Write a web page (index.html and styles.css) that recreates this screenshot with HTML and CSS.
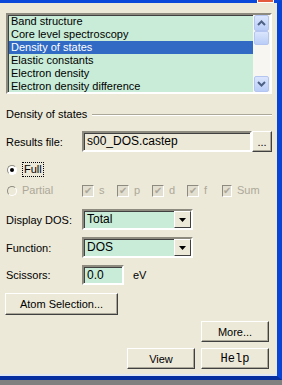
FILE: index.html
```html
<!DOCTYPE html>
<html lang="en">
<head>
  <meta charset="UTF-8" />
  <title>Analysis - Density of states</title>
  <link rel="stylesheet" href="styles.css">
</head>
<body>
  <div class="window">
    <span class="close-edge"></span>

    <div class="listbox">
      <ul class="items">
        <li>Band structure</li>
        <li>Core level spectroscopy</li>
        <li class="selected">Density of states</li>
        <li>Elastic constants</li>
        <li>Electron density</li>
        <li>Electron density difference</li>
      </ul>
      <div class="scrollbar">
        <div class="sb-btn">
          <svg width="9" height="6" viewBox="0 0 9 6"><path d="M1 5 L4.5 1.5 L8 5" fill="none" stroke="#4d6185" stroke-width="2"/></svg>
        </div>
        <div class="sb-thumb"></div>
        <div class="sb-track"></div>
        <div class="sb-btn">
          <svg width="9" height="6" viewBox="0 0 9 6"><path d="M1 1 L4.5 4.5 L8 1" fill="none" stroke="#4d6185" stroke-width="2"/></svg>
        </div>
      </div>
    </div>

    <div class="group">
      <span>Density of states</span>
      <span class="rule"></span>
    </div>

    <div class="row results">
      <label class="lbl">Results file:</label>
      <div class="field readonly">s00_DOS.castep</div>
      <button class="btn dots">...</button>
    </div>

    <div class="row radio-row">
      <span class="radio on"><span class="dot"></span></span>
      <span class="focus">Full</span>
    </div>

    <div class="row radio-row partial">
      <span class="radio"></span>
      <span class="lbl-partial">Partial</span>
      <div class="checks">
        <span class="check"><span class="box">&#10004;</span>s</span>
        <span class="check"><span class="box">&#10004;</span>p</span>
        <span class="check"><span class="box">&#10004;</span>d</span>
        <span class="check"><span class="box">&#10004;</span>f</span>
        <span class="check"><span class="box">&#10004;</span>Sum</span>
      </div>
    </div>

    <div class="row combo-row first">
      <label class="lbl">Display DOS:</label>
      <div class="combo">
        <span class="combo-text">Total</span>
        <span class="combo-btn"><svg width="7" height="4" viewBox="0 0 7 4"><path d="M0 0 H7 L3.5 4 Z" fill="#000"/></svg></span>
      </div>
    </div>

    <div class="row combo-row">
      <label class="lbl">Function:</label>
      <div class="combo">
        <span class="combo-text">DOS</span>
        <span class="combo-btn"><svg width="7" height="4" viewBox="0 0 7 4"><path d="M0 0 H7 L3.5 4 Z" fill="#000"/></svg></span>
      </div>
    </div>

    <div class="row scissors">
      <label class="lbl">Scissors:</label>
      <div class="field small">0.0</div>
      <span class="unit">eV</span>
    </div>

    <div class="row atoms">
      <button class="btn atom">Atom Selection...</button>
    </div>

    <div class="row right more">
      <button class="btn wide">More...</button>
    </div>

    <div class="row right actions">
      <button class="btn wide">View</button>
      <button class="btn wide help">Help</button>
    </div>
  </div>
</body>
</html>
```

FILE: styles.css
```css
body {
  margin: 0;
  width: 282px;
  height: 385px;
  overflow: hidden;
  background: #808080;
  font-family: "Liberation Sans", Arial, sans-serif;
  font-size: 11px;
  color: #000;
}

.window {
  position: relative;
  box-sizing: border-box;
  width: 282px;
  height: 380px;
  background: #ece9d8;
  border-top: 3px solid #0a49d9;
  border-right: 5px solid #0845d6;
  border-bottom: 4px solid #062e9e;
  box-shadow: inset 0 -2px 0 #dfe6f4;
  padding-left: 6px;
  display: flex;
  flex-direction: column;
}

.close-edge {
  position: absolute;
  top: -3px;
  left: 257px;
  width: 15px;
  height: 2px;
  border: 1px solid #fff;
  border-top: none;
  background: #e35b3c;
}

/* list */
.listbox {
  margin-top: 10px;
  width: 266px;
  height: 81px;
  box-sizing: border-box;
  border: 2px solid;
  border-color: #8d8b80 #fff #fff #8d8b80;
  box-shadow: inset 1px 1px 0 #404040;
  background: #c8ecd7;
  display: flex;
}

.items {
  list-style: none;
  margin: 0;
  padding: 0;
  flex: 1;
}

.items li {
  height: 13px;
  line-height: 13px;
  padding-left: 2px;
  margin-left: 1px;
  white-space: nowrap;
}

.items li.selected {
  background: #316ac5;
  color: #fff;
}

.scrollbar {
  width: 17px;
  background: #f7f6f1;
  display: flex;
  flex-direction: column;
}

.sb-btn, .sb-thumb {
  box-sizing: border-box;
  background: linear-gradient(#dbe6fd, #b9cdf7);
  border: 1px solid #b4c6ef;
  border-radius: 2px;
  margin: 0 1px;
}

.sb-btn {
  height: 16px;
  display: flex;
  align-items: center;
  justify-content: center;
}

.sb-thumb {
  height: 14px;
}

.sb-track {
  flex: 1;
}

/* group */
.group {
  margin-top: 14px;
  height: 13px;
  line-height: 13px;
  display: flex;
  align-items: center;
  width: 266px;
}

.rule {
  flex: 1;
  margin-left: 5px;
  height: 0;
  border-top: 1px solid #aca899;
  border-bottom: 1px solid #fff;
}

/* rows */
.row {
  display: flex;
  align-items: center;
}

.lbl {
  width: 76px;
}

.results {
  margin-top: 10px;
  height: 21px;
}

.field {
  box-sizing: border-box;
  height: 21px;
  line-height: 17px;
  padding-left: 3px;
  border: 2px solid;
  border-color: #8d8b80 #fff #fff #8d8b80;
  box-shadow: inset 1px 1px 0 #404040;
  font-size: 12px;
}

.readonly {
  width: 170px;
  background: #ece9d8;
}

.small {
  width: 42px;
  height: 20px;
  line-height: 16px;
  background: #c8ecd7;
}

.btn {
  box-sizing: border-box;
  font: inherit;
  color: #000;
  background: #ece9d8;
  border: 1px solid;
  border-color: #fff #404040 #404040 #fff;
  box-shadow: inset -1px -1px 0 #aca899;
  padding: 0;
  height: 21px;
}

.dots {
  width: 20px;
  line-height: 14px;
}

.radio-row {
  height: 13px;
  line-height: 13px;
}

.radio-row:not(.partial) {
  margin-top: 11px;
}

.partial {
  margin-top: 8px;
  color: #aca899;
}

.radio {
  box-sizing: border-box;
  width: 10px;
  height: 10px;
  border-radius: 50%;
  border: 1px solid;
  border-color: #8d8b80 #fff #fff #8d8b80;
  background: #fff;
  margin-left: 1px;
  margin-right: 5px;
  display: flex;
  align-items: center;
  justify-content: center;
}

.partial .radio {
  background: #ece9d8;
}

.dot {
  width: 4px;
  height: 4px;
  border-radius: 50%;
  background: #000;
}

.focus {
  outline: 1px dotted #000;
  padding: 0 1px;
  margin-left: 1px;
}

.lbl-partial {
  width: 60px;
}

.checks {
  display: flex;
}

.check {
  display: flex;
  align-items: center;
  width: 35px;
  color: #aca899;
}

.box {
  box-sizing: border-box;
  width: 12px;
  height: 12px;
  border: 1px solid;
  border-color: #8d8b80 #fff #fff #8d8b80;
  background: #e2dfd1;
  color: #aca899;
  font-size: 10px;
  line-height: 10px;
  text-align: center;
  margin-right: 5px;
}

.combo-row {
  margin-top: 7px;
  height: 21px;
}

.combo-row.first {
  margin-top: 12px;
}

.combo {
  box-sizing: border-box;
  width: 111px;
  height: 21px;
  border: 2px solid;
  border-color: #8d8b80 #fff #fff #8d8b80;
  box-shadow: inset 1px 1px 0 #404040;
  background: #c8ecd7;
  display: flex;
  font-size: 12px;
}

.combo-text {
  flex: 1;
  padding-left: 3px;
  line-height: 17px;
}

.combo-btn {
  box-sizing: border-box;
  width: 17px;
  height: 17px;
  background: #ece9d8;
  border: 1px solid;
  border-color: #fff #404040 #404040 #fff;
  display: flex;
  align-items: center;
  justify-content: center;
}

.scissors {
  margin-top: 7px;
  height: 20px;
}

.unit {
  margin-left: 9px;
}

.atoms {
  margin-top: 8px;
  margin-left: -1px;
}

.atom {
  width: 113px;
  height: 22px;
}

.right {
  justify-content: flex-end;
  width: 263px;
  gap: 6px;
}

.more {
  margin-top: 6px;
}

.actions {
  margin-top: 6px;
}

.wide {
  width: 68px;
}

.help {
  font-family: "Liberation Mono", "Courier New", monospace;
  font-size: 12px;
}
```
